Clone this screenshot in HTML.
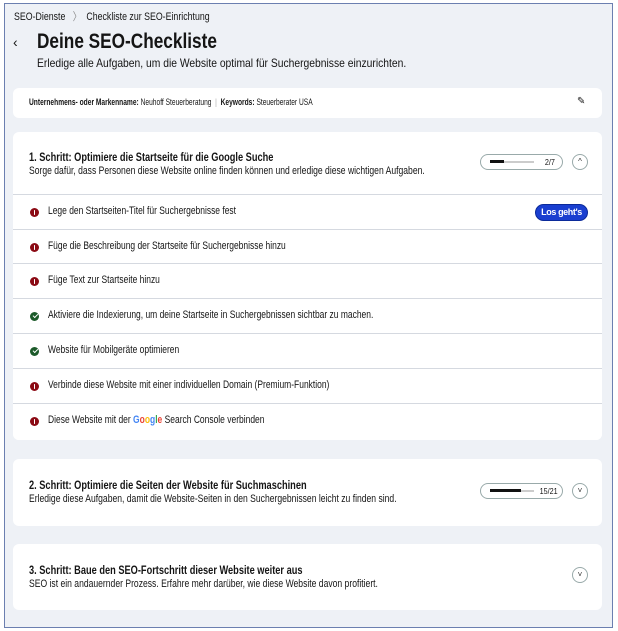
<!DOCTYPE html>
<html><head><meta charset="utf-8"><style>
*{margin:0;padding:0;box-sizing:border-box}
body{width:618px;height:631px;background:#fff;font-family:"Liberation Sans",sans-serif;color:#151515;position:relative;overflow:hidden}
.frame{position:absolute;left:4px;top:3px;width:609px;height:625px;border:1px solid #6b7fb0;background:#eef1f6}
.a{position:absolute;white-space:nowrap;transform-origin:left center}
.c{transform:scaleX(.8)}
.card{position:absolute;left:13px;width:589px;background:#fff;border-radius:6px}
.row{position:absolute;left:13px;width:589px;height:35px;border-top:1px solid #d5d9e0;background:#fff}
.row .t{position:absolute;left:35px;top:10px;font-size:11px;transform:scaleX(.77);transform-origin:left center;white-space:nowrap}
.ic{position:absolute;left:17px;top:13px;width:9px;height:9px;border-radius:50%}
.r{background:#8b0a14}.g{background:#1c5a2a}
.r::after{content:"";position:absolute;left:3.8px;top:1.8px;width:1.6px;height:5px;background:#fff;border-radius:1px}
.g::after{content:"";position:absolute;left:2.5px;top:2px;width:3.5px;height:2px;border-left:1.5px solid #fff;border-bottom:1.5px solid #fff;transform:rotate(-45deg)}
.pill{position:absolute;height:16px;border:1px solid #9aa;border-radius:8px;background:#fff}
.circ{position:absolute;width:16px;height:16px;border:1px solid #9aa;border-radius:50%;font-size:8px;text-align:center;line-height:14px;color:#333}
</style></head><body>
<div class="frame"></div>
<div class="a c" style="left:14px;top:8px;font-size:11px">SEO-Dienste &nbsp;&nbsp;<span style="color:#888">〉</span>&nbsp; Checkliste zur SEO-Einrichtung</div>
<div class="a" style="left:13px;top:34px;font-size:14px">‹</div>
<div class="a" style="left:37px;top:30px;font-size:21px;font-weight:bold;transform:scaleX(.82)">Deine SEO-Checkliste</div>
<div class="a" style="left:37px;top:56px;font-size:12px;transform:scaleX(.86)">Erledige alle Aufgaben, um die Website optimal für Suchergebnisse einzurichten.</div>

<div class="card" style="top:88px;height:30px"></div>
<div class="a" style="left:29px;top:97px;font-size:9.5px;transform:scaleX(.7)"><b>Unternehmens- oder Markenname:</b> Neuhoff Steuerberatung &nbsp;<span style="color:#aaa">|</span>&nbsp; <b>Keywords:</b> Steuerberater USA</div>
<div class="a" style="left:577px;top:96px;font-size:10px">✎</div>

<div class="card" style="top:132px;height:308px"></div>
<div class="a" style="left:29px;top:150px;font-size:12px;font-weight:bold;transform:scaleX(.77)">1. Schritt: Optimiere die Startseite für die Google Suche</div>
<div class="a" style="left:29px;top:165px;font-size:11px;transform:scaleX(.78)">Sorge dafür, dass Personen diese Website online finden können und erledige diese wichtigen Aufgaben.</div>
<div class="pill" style="left:480px;top:154px;width:83px"><div style="position:absolute;left:9px;top:6px;width:44px;height:2px;background:#ccc"></div><div style="position:absolute;left:9px;top:5px;width:14px;height:3px;background:#111"></div><span style="position:absolute;left:63px;top:2px;font-size:8.5px;transform:scaleX(.85);display:inline-block">2/7</span></div>
<div class="circ" style="left:572px;top:154px">^</div>

<div class="row" style="top:194px"><div class="ic r"></div><div class="t">Lege den Startseiten-Titel für Suchergebnisse fest</div>
<div style="position:absolute;left:522px;top:9px;width:53px;height:17px;border-radius:9px;background:#1a3fd0;border:1px solid #0b2a9a;color:#fff;font-size:9px;font-weight:bold;text-align:center;line-height:15px;letter-spacing:-.4px">Los geht's</div></div>
<div class="row" style="top:229px"><div class="ic r"></div><div class="t">Füge die Beschreibung der Startseite für Suchergebnisse hinzu</div></div>
<div class="row" style="top:263px"><div class="ic r"></div><div class="t">Füge Text zur Startseite hinzu</div></div>
<div class="row" style="top:298px"><div class="ic g"></div><div class="t">Aktiviere die Indexierung, um deine Startseite in Suchergebnissen sichtbar zu machen.</div></div>
<div class="row" style="top:333px"><div class="ic g"></div><div class="t">Website für Mobilgeräte optimieren</div></div>
<div class="row" style="top:368px"><div class="ic r"></div><div class="t">Verbinde diese Website mit einer individuellen Domain (Premium-Funktion)</div></div>
<div class="row" style="top:403px;height:37px;border-radius:0 0 6px 6px"><div class="ic r"></div><div class="t">Diese Website mit der <b><span style="color:#4285f4">G</span><span style="color:#ea4335">o</span><span style="color:#fbbc05">o</span><span style="color:#4285f4">g</span><span style="color:#34a853">l</span><span style="color:#ea4335">e</span></b> Search Console verbinden</div></div>

<div class="card" style="top:459px;height:67px"></div>
<div class="a" style="left:29px;top:478px;font-size:12px;font-weight:bold;transform:scaleX(.77)">2. Schritt: Optimiere die Seiten der Website für Suchmaschinen</div>
<div class="a" style="left:29px;top:493px;font-size:11px;transform:scaleX(.78)">Erledige diese Aufgaben, damit die Website-Seiten in den Suchergebnissen leicht zu finden sind.</div>
<div class="pill" style="left:480px;top:483px;width:83px"><div style="position:absolute;left:9px;top:6px;width:44px;height:2px;background:#ccc"></div><div style="position:absolute;left:9px;top:5px;width:31px;height:3px;background:#111"></div><span style="position:absolute;left:57px;top:2px;font-size:8.5px;transform:scaleX(.85);display:inline-block">15/21</span></div>
<div class="circ" style="left:572px;top:483px">˅</div>

<div class="card" style="top:544px;height:66px"></div>
<div class="a" style="left:29px;top:563px;font-size:12px;font-weight:bold;transform:scaleX(.77)">3. Schritt: Baue den SEO-Fortschritt dieser Website weiter aus</div>
<div class="a" style="left:29px;top:578px;font-size:11px;transform:scaleX(.78)">SEO ist ein andauernder Prozess. Erfahre mehr darüber, wie diese Website davon profitiert.</div>
<div class="circ" style="left:572px;top:567px">˅</div>
</body></html>
